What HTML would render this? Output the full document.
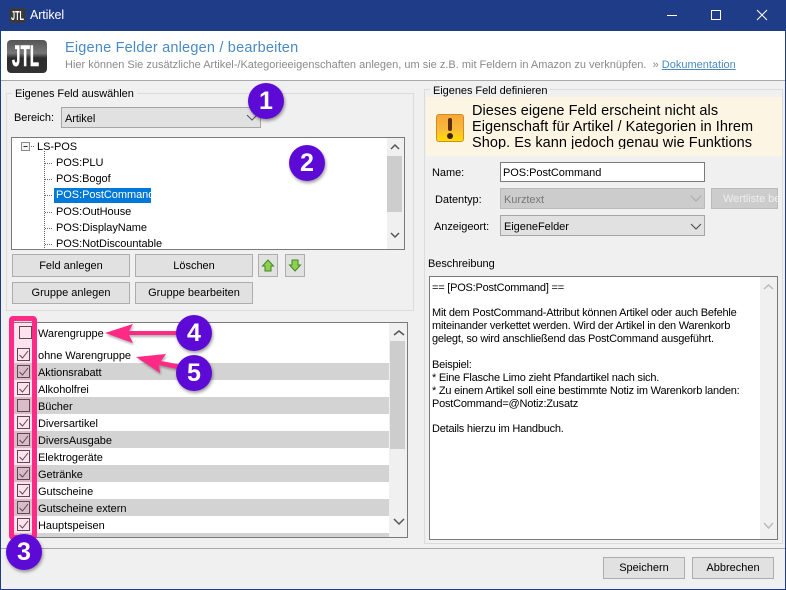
<!DOCTYPE html>
<html><head><meta charset="utf-8"><style>
html,body{margin:0;padding:0;width:786px;height:590px;overflow:hidden;background:#f0f0f0}
body{position:relative;font:11px/16px "Liberation Sans",sans-serif;color:#000}
div,span.a,svg{position:absolute}
.t{white-space:nowrap;letter-spacing:-.05px}
.b{background:#e1e1e1;border:1px solid #adadad;box-sizing:border-box;text-align:center;line-height:22px;white-space:nowrap}
.gb{border:1px solid #dcdcdc;box-sizing:border-box}
.lg{background:#f0f0f0;padding:0 3px;white-space:nowrap}
.s{left:14px;width:375px;height:17px;background:#d3d3d3}
.r{left:38px;white-space:nowrap}
.n{width:36px;height:36px;border-radius:50%;background:#5e0ad6;color:#fff;font:bold 25px/36px "Liberation Sans",sans-serif;text-align:center;box-shadow:1px 2px 3px rgba(0,0,0,.4)}
.d{left:432px;white-space:nowrap;line-height:15px;font-size:11px;letter-spacing:-.22px}
.tr{left:56px;white-space:nowrap}
</style></head><body>
<div style="left:0;top:0;width:786px;height:31px;background:#1f3c88"></div>
<div style="left:0;top:0;width:1px;height:590px;background:#1f3c88;z-index:5"></div>
<div style="left:785px;top:0;width:1px;height:590px;background:#1f3c88;z-index:5"></div>
<div style="left:0;top:589px;width:786px;height:1px;background:#1f3c88;z-index:5"></div>
<svg style="left:9px;top:8px" width="17" height="15"><rect x="0.500" y="0" width="16" height="15" rx="2" fill="#3a3a3a"/><text x="2" y="12" font-family="Liberation Sans" font-weight="bold" font-size="13" fill="#fff" textLength="13" lengthAdjust="spacingAndGlyphs">JTL</text></svg>
<div class="t" style="left:30px;top:7px;color:#fff;font-size:12.500px;letter-spacing:-.1px">Artikel</div>
<svg style="left:660px;top:5px" width="120" height="22" fill="none" stroke="#fff"><path d="M7 10.500H17"/><path d="M51.500 5.500H60.500V14.500H51.500Z"/><path d="M97 5L107 15M107 5L97 15"/></svg>

<div style="left:1px;top:31px;width:784px;height:49px;background:#fff"></div>
<div style="left:1px;top:80px;width:784px;height:1px;background:#a9a9a9"></div>
<svg style="left:7px;top:40px" width="40" height="33"><defs><linearGradient id="g" x1="0" y1="0" x2="0" y2="1"><stop offset="0" stop-color="#555"/><stop offset=".4" stop-color="#777"/><stop offset=".55" stop-color="#2b2b2b"/><stop offset="1" stop-color="#333"/></linearGradient></defs><rect width="40" height="33" rx="4" fill="url(#g)"/><text x="5" y="26" font-family="Liberation Sans" font-weight="bold" font-size="30" fill="#fff" stroke="#fff" stroke-width=".6" textLength="27" lengthAdjust="spacingAndGlyphs">JTL</text></svg>
<div class="t" style="left:65px;top:39px;font-size:14.500px;line-height:18px;color:#4a8ac4;letter-spacing:.2px">Eigene Felder anlegen / bearbeiten</div>
<div class="t" style="left:65px;top:57px;font-size:11px;color:#8a8a8a;letter-spacing:0">Hier können Sie zusätzliche Artikel-/Kategorieeigenschaften anlegen, um sie z.B. mit Feldern in Amazon zu verknüpfen.&nbsp; » <span style="color:#4a8ac4;text-decoration:underline">Dokumentation</span></div>

<!-- left group -->
<div class="gb" style="left:6px;top:93px;width:408px;height:218px"></div>
<div class="lg t" style="left:12px;top:86px">Eigenes Feld auswählen</div>
<div class="t" style="left:14px;top:110px">Bereich:</div>
<div style="left:61px;top:107px;width:200px;height:21px;box-sizing:border-box;background:#e1e1e1;border:1px solid #a5a5a5"></div>
<div class="t" style="left:65px;top:111px">Artikel</div>
<svg style="left:246px;top:113px" width="12" height="9" fill="none" stroke="#555"><path d="M1 2L6 7L11 2"/></svg>

<!-- tree -->
<div style="left:11px;top:137px;width:394px;height:113px;box-sizing:border-box;background:#fff;border:1px solid #7a7a7a;overflow:hidden"></div>
<div style="left:387px;top:138px;width:17px;height:111px;background:#f0f0f0"></div>
<div style="left:387px;top:156px;width:15px;height:56px;background:#cdcdcd"></div>
<svg style="left:389px;top:143px" width="12" height="100" fill="none" stroke="#555" stroke-width="1.500"><path d="M2 6L6 2L10 6M2 90L6 94L10 90"/></svg>
<svg style="left:20px;top:140px" width="40" height="109" fill="none"><rect x="1.500" y="2.500" width="8" height="8" fill="#f4f4f4" stroke="#8a8a8a"/><path d="M3.500 6.500H7.500" stroke="#333"/><path d="M11 6.500H15M24.500 11V109M25 23.500H33M25 39.500H33M25 55.500H33M25 72.500H33M25 88.500H33M25 104.500H33" stroke="#666" stroke-dasharray="1 1"/></svg>
<div class="t" style="left:37px;top:139px">LS-POS</div>
<div class="t tr" style="top:155px">POS:PLU</div>
<div class="t tr" style="top:171px">POS:Bogof</div>
<div style="left:54px;top:188px;width:97px;height:15px;background:#0078d7"></div>
<div class="t tr" style="top:187px;color:#fff">POS:PostCommand</div>
<div class="t tr" style="top:204px">POS:OutHouse</div>
<div class="t tr" style="top:220px">POS:DisplayName</div>
<div class="t tr" style="top:236px;height:13px;overflow:hidden">POS:NotDiscountable</div>

<div class="b" style="left:12px;top:254px;width:118px;height:23px">Feld anlegen</div>
<div class="b" style="left:135px;top:254px;width:118px;height:23px">Löschen</div>
<div class="b" style="left:258px;top:254px;width:20px;height:23px"></div>
<div class="b" style="left:285px;top:254px;width:20px;height:23px"></div>
<svg style="left:258px;top:254px" width="48" height="23"><path d="M10 6L15.500 12H13V17H7V12H4.500Z" fill="#8fd04f" stroke="#3d8a1f"/><path d="M37 17L42.500 11H40V6H34V11H31.500Z" fill="#8fd04f" stroke="#3d8a1f"/></svg>
<div class="b" style="left:12px;top:282px;width:118px;height:22px;line-height:21px">Gruppe anlegen</div>
<div class="b" style="left:135px;top:282px;width:118px;height:22px;line-height:21px">Gruppe bearbeiten</div>

<!-- list -->
<div style="left:12px;top:322px;width:396px;height:216px;box-sizing:border-box;background:#fff;border:1px solid #7a7a7a"></div>
<div style="left:389px;top:323px;width:18px;height:214px;background:#f0f0f0"></div>
<div style="left:390px;top:341px;width:15px;height:108px;background:#cdcdcd"></div>
<svg style="left:392px;top:327px" width="14" height="204" fill="none" stroke="#555" stroke-width="1.500"><path d="M2 8L7 4L12 8M2 192L7 197L12 192"/></svg>
<div class="s" style="top:363px"></div>
<div class="s" style="top:397px"></div>
<div class="s" style="top:431px"></div>
<div class="s" style="top:465px"></div>
<div class="s" style="top:499px"></div>
<div class="s" style="top:533px;height:4px"></div>
<div class="t r" style="top:326px">Warengruppe</div>
<div class="t r" style="top:348px">ohne Warengruppe</div>
<div class="t r" style="top:365px">Aktionsrabatt</div>
<div class="t r" style="top:382px">Alkoholfrei</div>
<div class="t r" style="top:399px">Bücher</div>
<div class="t r" style="top:416px">Diversartikel</div>
<div class="t r" style="top:433px">DiversAusgabe</div>
<div class="t r" style="top:450px">Elektrogeräte</div>
<div class="t r" style="top:467px">Getränke</div>
<div class="t r" style="top:484px">Gutscheine</div>
<div class="t r" style="top:501px">Gutscheine extern</div>
<div class="t r" style="top:518px">Hauptspeisen</div>
<!-- checks -->
<div style="left:9px;top:316px;width:28px;height:224px;box-sizing:border-box;border:5px solid #ff2a85;border-radius:4px;background:rgba(255,60,140,.15)"></div>
<svg style="left:14px;top:322px" width="20" height="216" fill="none" stroke="#5a4a52">
<rect x="5.500" y="4.500" width="12" height="12"/>
<g transform="translate(0,1)">
<rect x="3.500" y="25.500" width="12" height="12"/><path d="M5.500 32L8.500 35L14 28"/>
<rect x="3.500" y="42.500" width="12" height="12"/><path d="M5.500 49L8.500 52L14 45"/>
<rect x="3.500" y="59.500" width="12" height="12"/><path d="M5.500 66L8.500 69L14 62"/>
<rect x="3.500" y="76.500" width="12" height="12"/>
<rect x="3.500" y="93.500" width="12" height="12"/><path d="M5.500 100L8.500 103L14 96"/>
<rect x="3.500" y="110.500" width="12" height="12"/><path d="M5.500 117L8.500 120L14 113"/>
<rect x="3.500" y="127.500" width="12" height="12"/><path d="M5.500 134L8.500 137L14 130"/>
<rect x="3.500" y="144.500" width="12" height="12"/><path d="M5.500 151L8.500 154L14 147"/>
<rect x="3.500" y="161.500" width="12" height="12"/><path d="M5.500 168L8.500 171L14 164"/>
<rect x="3.500" y="178.500" width="12" height="12"/><path d="M5.500 185L8.500 188L14 181"/>
<rect x="3.500" y="195.500" width="12" height="12"/><path d="M5.500 202L8.500 205L14 198"/>
</g>
</svg>
<!-- arrows -->
<svg style="left:100px;top:318px;z-index:3" width="90" height="60"><g fill="#ff2a85" style="filter:drop-shadow(1px 2px 1px rgba(0,0,0,.3))"><path d="M5 15L33 6L29 13L80 13V17L29 17L33 25Z"/><path d="M36 39L66 36L61 43L82 47L81 52L59 47L60 55Z"/></g></svg>
<div class="n" style="left:248px;top:83px;z-index:4">1</div>
<div class="n" style="left:289px;top:145px;z-index:4">2</div>
<div class="n" style="left:6px;top:534px;z-index:4">3</div>
<div class="n" style="left:176px;top:315px;z-index:4">4</div>
<div class="n" style="left:176px;top:355px;z-index:4">5</div>

<!-- right group -->
<div class="gb" style="left:424px;top:89px;width:359px;height:455px"></div>
<div class="lg t" style="left:430px;top:83px">Eigenes Feld definieren</div>
<div style="left:426px;top:97px;width:356px;height:59px;background:#fdf5e3"></div>
<div style="left:436px;top:114px;width:28px;height:28px;border-radius:3px;border:1px solid #d68a20;box-sizing:border-box;background:linear-gradient(#f6a73a,#f9b93a 55%,#ffe000)"></div>
<div style="left:448px;top:118px;width:4px;height:13px;background:#5a2d10;border-radius:2px"></div>
<div style="left:447px;top:133px;width:6px;height:6px;background:#3a2008;border-radius:50%"></div>
<div class="t" style="left:472px;top:103px;width:310px;height:46px;font-size:14.500px;line-height:16px;overflow:hidden;letter-spacing:.05px">Dieses eigene Feld erscheint nicht als<br>Eigenschaft für Artikel / Kategorien in Ihrem<br>Shop. Es kann jedoch genau wie Funktions</div>

<div class="t" style="left:432px;top:165px">Name:</div>
<div style="left:500px;top:162px;width:205px;height:20px;box-sizing:border-box;background:#fff;border:1px solid #7a7a7a"></div>
<div class="t" style="left:503px;top:165px">POS:PostCommand</div>
<div class="t" style="left:435px;top:192px">Datentyp:</div>
<div style="left:500px;top:188px;width:205px;height:21px;box-sizing:border-box;background:#ccc;border:1px solid #bbb"></div>
<div class="t" style="left:504px;top:192px;color:#777">Kurztext</div>
<svg style="left:690px;top:194px" width="12" height="9" fill="none" stroke="#aaa"><path d="M1 2L6 7L11 2"/></svg>
<div style="left:711px;top:188px;width:67px;height:21px;box-sizing:border-box;background:#ccc;border:1px solid #bbb;overflow:hidden"></div>
<div class="t" style="left:723px;top:191px;width:55px;overflow:hidden;color:#eee">Wertliste bearbeiten</div>
<div class="t" style="left:434px;top:219px">Anzeigeort:</div>
<div style="left:500px;top:215px;width:205px;height:21px;box-sizing:border-box;background:#e1e1e1;border:1px solid #a5a5a5"></div>
<div class="t" style="left:504px;top:219px">EigeneFelder</div>
<svg style="left:690px;top:222px" width="12" height="9" fill="none" stroke="#444"><path d="M1 2L6 7L11 2"/></svg>
<div class="t" style="left:428px;top:256px">Beschreibung</div>
<div style="left:429px;top:276px;width:349px;height:264px;box-sizing:border-box;background:#fff;border:1px solid #7a7a7a"></div>
<div style="left:760px;top:277px;width:17px;height:262px;background:#f0f0f0"></div>
<svg style="left:762px;top:282px" width="14" height="250" fill="none" stroke="#bbb" stroke-width="1.500"><path d="M2 7L6.500 3L11 7M2 241L6.500 246L11 241"/></svg>
<div class="d" style="top:281px">== [POS:PostCommand] ==</div>
<div class="d" style="top:306px">Mit dem PostCommand-Attribut können Artikel oder auch Befehle</div>
<div class="d" style="top:319px">miteinander verkettet werden. Wird der Artikel in den Warenkorb</div>
<div class="d" style="top:332px">gelegt, so wird anschließend das PostCommand ausgeführt.</div>
<div class="d" style="top:358px">Beispiel:</div>
<div class="d" style="top:371px">* Eine Flasche Limo zieht Pfandartikel nach sich.</div>
<div class="d" style="top:384px">* Zu einem Artikel soll eine bestimmte Notiz im Warenkorb landen:</div>
<div class="d" style="top:397px">PostCommand=@Notiz:Zusatz</div>
<div class="d" style="top:422px">Details hierzu im Handbuch.</div>

<!-- footer -->
<div style="left:1px;top:548px;width:784px;height:1px;background:#a9a9a9"></div>
<div class="b" style="left:603px;top:557px;width:82px;height:22px;line-height:21px">Speichern</div>
<div class="b" style="left:692px;top:557px;width:82px;height:22px;line-height:21px">Abbrechen</div>
</body></html>
